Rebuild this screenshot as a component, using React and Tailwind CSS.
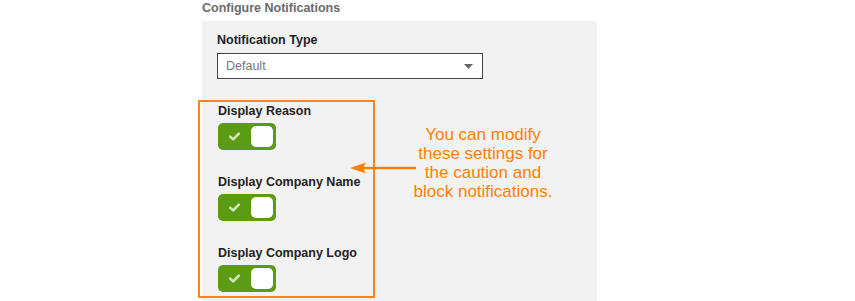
import React from 'react';

const settings = ['Display Reason', 'Display Company Name', 'Display Company Logo'];

function Toggle() {
  return (
    <div className="flex h-[27px] w-[58px] items-center justify-between rounded-[5px] bg-[#5b9c14] pl-[11px] pr-[3px]">
      <svg width="11" height="9" viewBox="0 0 11 9">
        <path d="M1.2 4.6 L4.2 7.4 L9.8 1.6" fill="none" stroke="#d3e6b8" strokeWidth="2.6" strokeLinecap="round" strokeLinejoin="round" />
      </svg>
      <div className="h-[21px] w-[22px] rounded-[5px] bg-white" />
    </div>
  );
}

export default function App() {
  return (
    <div className="relative h-[301px] w-[855px] overflow-hidden bg-white font-['Liberation_Sans',Arial,sans-serif]">
      <div className="pl-[202px]">
        {/* Section title */}
        <h2 className="h-[21px] text-[12.5px] font-bold leading-[16px] text-[#6b6b6b]">Configure Notifications</h2>

        {/* Panel */}
        <div className="h-[280px] w-[395px] bg-[#f2f2f2] pl-[15px] pt-[11px]">
          <div className="text-[12.5px] font-bold leading-[16px] text-[#222]">Notification Type</div>
          <div className="mt-[5px] flex h-[26px] w-[266px] items-center justify-between border border-[#444] bg-white pl-2 pr-[9px]">
            <span className="text-[12.5px] text-[#777]">Default</span>
            <svg width="9" height="5" viewBox="0 0 9 5">
              <path d="M0 0 H9 L4.5 5 Z" fill="#666" />
            </svg>
          </div>

          {/* Highlighted toggles */}
          <div className="-ml-[19px] mt-[21px] flex h-[198px] w-[177px] flex-col gap-[24px] border-2 border-[#ff8419] pl-[18px] pt-[1px]">
            {settings.map((label) => (
              <div key={label} className="flex flex-col gap-[4px]">
                <div className="text-[12.5px] font-bold leading-[16px] text-[#222]">{label}</div>
                <Toggle />
              </div>
            ))}
          </div>
        </div>
      </div>

      {/* Callout arrow */}
      <svg className="absolute left-[349px] top-[161px]" width="68" height="14" viewBox="0 0 68 14">
        <path d="M1 7 L17 1.5 L14 7 L17 12.5 Z" fill="#ff8000" />
        <rect x="14" y="5.8" width="53" height="2.5" fill="#ff8000" />
      </svg>

      {/* Callout text */}
      <p className="absolute left-[388px] top-[125px] w-[190px] text-center text-[17px] leading-[19px] text-[#ff8000]">
        You can modify
        <br />
        these settings for
        <br />
        the caution and
        <br />
        block notifications.
      </p>
    </div>
  );
}
